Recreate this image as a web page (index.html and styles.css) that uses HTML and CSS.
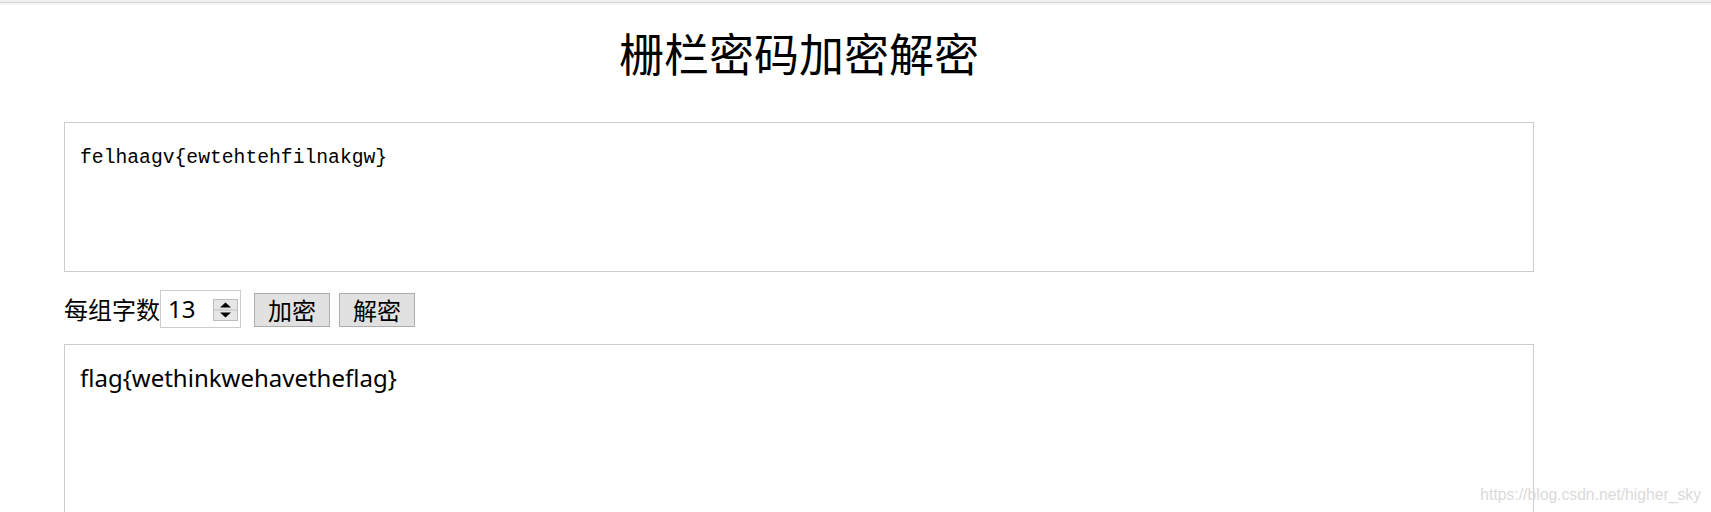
FILE: index.html
```html
<!DOCTYPE html>
<html lang="zh-CN">
<head>
<meta charset="utf-8">
<title>栅栏密码加密解密</title>
<link rel="stylesheet" href="styles.css">
</head>
<body>
<div class="topbar"></div>
<main class="wrap">
  <h1 class="title">栅栏密码加密解密</h1>
  <textarea class="box box-in" readonly>felhaagv{ewtehtehfilnakgw}</textarea>
  <div class="controls">
    <label class="label">每组字数</label>
    <div class="num">
      <span class="num-val">13</span>
      <svg class="spin" width="25" height="22" viewBox="0 0 25 22">
        <rect x="0.5" y="0.5" width="24" height="21" fill="#e6e6e6" stroke="#bdbdbd"/>
        <line x1="1" y1="11" x2="24" y2="11" stroke="#bdbdbd"/>
        <polygon points="7,8.5 18,8.5 12.5,3.5" fill="#000"/>
        <polygon points="7,13.5 18,13.5 12.5,18.5" fill="#000"/>
      </svg>
    </div>
    <button class="btn btn-first" type="button">加密</button>
    <button class="btn" type="button">解密</button>
  </div>
  <textarea class="box box-out" readonly>flag{wethinkwehavetheflag}</textarea>
</main>
<div class="watermark">https://blog.csdn.net/higher_sky</div>
</body>
</html>
```

FILE: styles.css
```css
html, body {
  margin: 0;
  padding: 0;
  overflow: hidden;
  background: #fff;
}

body {
  font-family: "Noto Sans CJK SC", sans-serif;
  color: #000;
  height: 512px;
  position: relative;
}

.topbar {
  height: 2px;
  background: #efefef;
  border-bottom: 1px solid #d4d4d4;
  box-shadow: 0 1px 3px rgba(0, 0, 0, 0.08);
}

.wrap {
  width: 1470px;
  margin-left: 64px;
  display: flex;
  flex-direction: column;
}

.title {
  margin: 20px 0 39px;
  height: 60px;
  font-size: 45px;
  line-height: 60px;
  font-weight: 400;
  text-align: center;
  font-family: "Noto Sans CJK SC", sans-serif;
}

.box {
  display: block;
  box-sizing: border-box;
  width: 1470px;
  border: 1px solid #cccccc;
  resize: none;
  outline: none;
  margin: 0;
  background: #fff;
  color: #000;
}

.box-in {
  height: 150px;
  padding: 24px 15px 0;
  font-family: "Liberation Mono", monospace;
  font-size: 19.7px;
  line-height: 22px;
}

.box-out {
  height: 200px;
  margin-top: 16px;
  padding: 17px 15px 0;
  font-family: "Noto Sans", "Noto Sans CJK SC", sans-serif;
  font-size: 24px;
  line-height: 32px;
}

.controls {
  display: flex;
  align-items: center;
  margin-top: 18px;
  height: 38px;
}

.label {
  font-size: 24px;
  line-height: 38px;
  width: 96px;
}

.num {
  box-sizing: border-box;
  width: 81px;
  height: 38px;
  border: 1px solid #cccccc;
  display: flex;
  align-items: center;
  justify-content: space-between;
  padding: 0 2px 0 7px;
}

.num-val {
  font-family: "Noto Sans", sans-serif;
  font-size: 24px;
  line-height: 1;
}

.spin {
  display: block;
  margin-top: 1px;
}

.btn {
  box-sizing: border-box;
  height: 34px;
  width: 76px;
  padding: 0;
  margin: 1px 0 0 9px;
  border: 1px solid #adadad;
  background: #e1e1e1;
  font-family: "Noto Sans CJK SC", sans-serif;
  font-size: 24px;
  line-height: 30px;
  color: #000;
  border-radius: 0;
}

.btn-first {
  margin-left: 13px;
}

.watermark {
  position: absolute;
  right: 10px;
  top: 485px;
  font-family: "Liberation Sans", sans-serif;
  font-size: 15.7px;
  line-height: 20px;
  color: #dadada;
}
```
